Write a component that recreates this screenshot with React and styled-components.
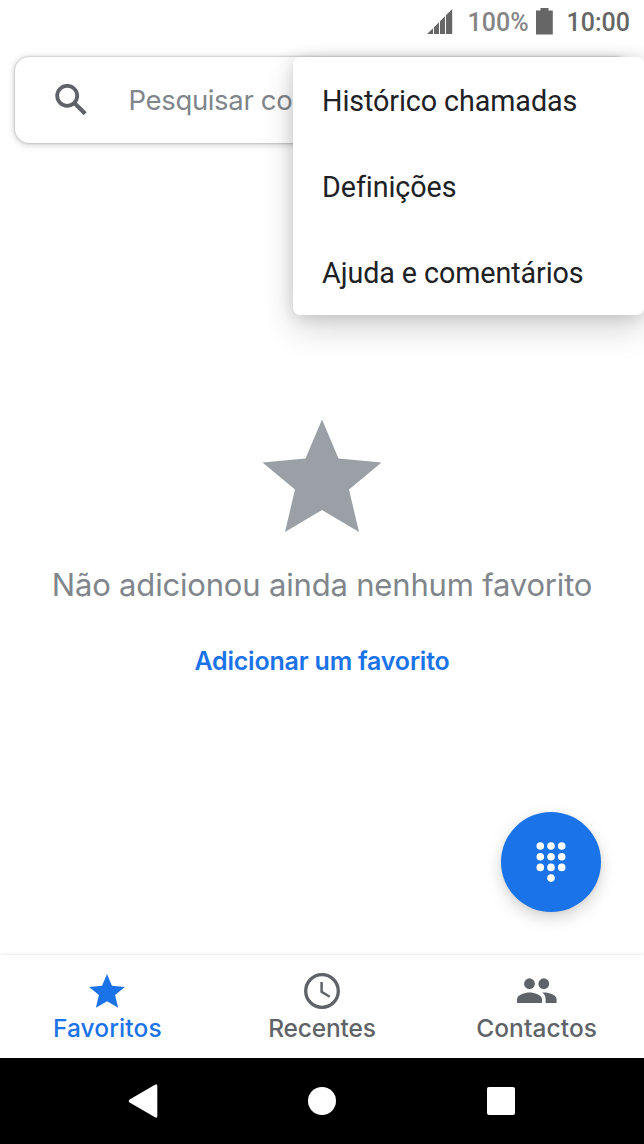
import React, { useState } from "react";
import styled, { createGlobalStyle } from "styled-components";

const menuItems = ["Histórico chamadas", "Definições", "Ajuda e comentários"];

const tabs = [
  { id: "favorites", label: "Favoritos", icon: StarIcon, size: 36, spacing: "0.1px" },
  { id: "recents", label: "Recentes", icon: ClockIcon, size: 36, spacing: "-0.15px" },
  { id: "contacts", label: "Contactos", icon: PeopleIcon, size: 40, spacing: "0.1px" },
];

function StarIcon({ size }) {
  return (
    <svg width={size} height={size} viewBox="0 0 120 120" fill="currentColor">
      <path d="M60 3.5 76.5 42.5 119.5 46.5 87 73.5 97 116 60 94 23 116 33 73.5 .5 46.5 43.5 42.5Z" />
    </svg>
  );
}

function ClockIcon() {
  return (
    <svg width="36" height="36" viewBox="0 0 36 36" fill="none" stroke="currentColor">
      <circle cx="18" cy="18" r="16.3" strokeWidth="3.3" />
      <path d="M17.6 9V18.8L25.7 23.8" strokeWidth="2.5" />
    </svg>
  );
}

function PeopleIcon() {
  return (
    <svg width="40" height="36" viewBox="0 0 40 36" fill="currentColor">
      <circle cx="12.5" cy="10.7" r="5.4" />
      <circle cx="26.8" cy="10.7" r="5.4" />
      <path d="M0 30V26.3C0 21.6 7.8 19.4 12.5 19.4S25 21.6 25 26.3V30Z" />
      <path d="M25.3 19.6C30.3 19 39.6 21.4 39.6 26.3V30H28.6V26.3C28.6 23.3 27.3 21.2 25.3 19.6Z" />
    </svg>
  );
}

function SearchIcon() {
  return (
    <svg width="32" height="32" viewBox="0 0 32 32" fill="none" stroke="#5f6368">
      <circle cx="12.2" cy="11.8" r="10" strokeWidth="3.8" />
      <path d="M19.4 19 30.2 29.8" strokeWidth="4.2" />
    </svg>
  );
}

function SignalIcon() {
  return (
    <svg width="26" height="26" viewBox="0 0 26 26" fill="#666">
      <path d="M0 25 6 19.2V25ZM7 18.2 12 13.2V25H7ZM13 12.2 18 7.2V25H13ZM19 6.2 25.2 0V25H19Z" />
    </svg>
  );
}

function BatteryIcon() {
  return (
    <svg width="17" height="27" viewBox="0 0 17 27" fill="#666">
      <path d="M4.5 0H12.5V2.4H16.8V26.5H0V2.4H4.5Z" />
    </svg>
  );
}

function DialpadIcon() {
  const dots = [];
  for (let row = 0; row < 3; row++) {
    for (let col = 0; col < 3; col++) {
      dots.push([4.3 + col * 10.7, 4 + row * 10.7]);
    }
  }
  dots.push([15, 36.1]);
  return (
    <svg width="30" height="40" viewBox="0 0 30 40" fill="#fff">
      {dots.map(([x, y]) => (
        <circle key={`${x}-${y}`} cx={x} cy={y} r="3.8" />
      ))}
    </svg>
  );
}

export default function App() {
  const [currentTab, setCurrentTab] = useState("favorites");

  return (
    <>
      <GlobalStyle />
      <Screen>
        <StatusBar>
          <SignalIcon />
          <Percent>100%</Percent>
          <BatteryIcon />
          <Time>10:00</Time>
        </StatusBar>

        <Content>
          <SearchBar>
            <SearchIcon />
            <Placeholder>Pesquisar co</Placeholder>
          </SearchBar>
          <EmptyState>
            <StarIcon size={120} />
            <Message>Não adicionou ainda nenhum favorito</Message>
            <AddButton>Adicionar um favorito</AddButton>
          </EmptyState>
          <Fab aria-label="Teclado">
            <DialpadIcon />
          </Fab>
          <Menu>
            {menuItems.map((item) => (
              <MenuItem key={item}>{item}</MenuItem>
            ))}
          </Menu>
        </Content>

        <TabBar>
          {tabs.map(({ id, label, icon: Icon, size, spacing }) => (
            <Tab key={id} $active={id === currentTab} $spacing={spacing} onClick={() => setCurrentTab(id)}>
              <Icon size={size} />
              <span>{label}</span>
            </Tab>
          ))}
        </TabBar>

        <SystemBar>
          <svg width="30" height="34" viewBox="0 0 30 34" fill="#fff">
            <path d="M1.6 15.5 27 .7Q29.3-.5 29.3 2V32Q29.3 34.5 27 33.3L1.6 18.5Q-.2 17 1.6 15.5Z" />
          </svg>
          <HomeKey />
          <OverviewKey />
        </SystemBar>
      </Screen>
    </>
  );
}

const GlobalStyle = createGlobalStyle`
  * {
    box-sizing: border-box;
  }
  body {
    margin: 0;
    background: #fff;
  }
  button {
    border: none;
    padding: 0;
    background: none;
    cursor: pointer;
  }
  svg {
    display: block;
    flex-shrink: 0;
  }
`;

const Screen = styled.div`
  display: flex;
  flex-direction: column;
  width: 644px;
  height: 1144px;
  overflow: hidden;
  background: #fff;
  font-family: Inter, "Open Sans", sans-serif;
`;

const StatusBar = styled.div`
  display: flex;
  align-items: center;
  justify-content: flex-end;
  height: 42px;
  padding: 1px 14px 0 0;
  font-family: Roboto, sans-serif;
  font-size: 25px;
  font-weight: 500;
`;

const Percent = styled.span`
  margin: 1px 7px 0 15px;
  color: #858585;
`;

const Time = styled.span`
  margin: 1px 0 0 14px;
  color: #666;
`;

const Content = styled.main`
  position: relative;
  display: flex;
  flex-direction: column;
  height: 913px;
  padding: 15px 15px 0;
  overflow: hidden;
`;

const SearchBar = styled.div`
  display: flex;
  align-items: center;
  height: 86px;
  padding-left: 40px;
  border-radius: 14px;
  background: #fff;
  box-shadow: 0 0 2px rgba(0, 0, 0, 0.3), 0 1px 7px rgba(0, 0, 0, 0.25);
`;

const Placeholder = styled.span`
  margin-left: 41.5px;
  color: #80868b;
  font-size: 27.5px;
  letter-spacing: -0.35px;
  white-space: nowrap;
`;

const EmptyState = styled.section`
  display: flex;
  flex-direction: column;
  align-items: center;
  padding-top: 273px;
  color: #9aa0a6;
`;

const Message = styled.p`
  margin: 29px 0 0;
  color: #80868b;
  font-size: 31px;
  line-height: 40px;
  letter-spacing: -0.18px;
  white-space: nowrap;
`;

const AddButton = styled.button`
  margin-top: 40px;
  color: #1a73e8;
  font-family: inherit;
  font-size: 25px;
  font-weight: 600;
  line-height: 32px;
  letter-spacing: -0.2px;
`;

const Fab = styled.button`
  display: flex;
  align-items: center;
  justify-content: center;
  position: absolute;
  right: 43px;
  bottom: 43px;
  width: 100px;
  height: 100px;
  border-radius: 50%;
  background: #1a73e8;
  box-shadow: 0 6px 16px rgba(0, 0, 0, 0.17), 0 1px 4px rgba(0, 0, 0, 0.06);
`;

const Menu = styled.div`
  position: absolute;
  top: 15px;
  right: 0;
  width: 351px;
  height: 258px;
  border-radius: 7px;
  background: #fff;
  box-shadow: 0 14px 32px rgba(0, 0, 0, 0.16), 0 1px 16px rgba(0, 0, 0, 0.14);
`;

const MenuItem = styled.div`
  display: flex;
  align-items: center;
  height: 86px;
  padding: 2px 0 0 29px;
  color: #202124;
  font-family: Roboto, sans-serif;
  font-size: 28.7px;
  letter-spacing: -0.08px;
  font-variant-ligatures: common-ligatures;
`;

const TabBar = styled.nav`
  display: grid;
  grid-template-columns: repeat(3, 1fr);
  position: relative;
  height: 103px;
  background: #fff;
  box-shadow: 0 -1px 3px rgba(0, 0, 0, 0.09);
`;

const Tab = styled.button`
  display: flex;
  flex-direction: column;
  align-items: center;
  padding-top: 18px;
  color: ${({ $active }) => ($active ? "#1a73e8" : "#5f6368")};
  font-family: inherit;
  font-size: 24.5px;
  font-weight: 500;
  line-height: 30px;
  letter-spacing: ${({ $spacing }) => $spacing};
  span {
    margin-top: 4px;
  }
`;

const SystemBar = styled.footer`
  display: flex;
  align-items: center;
  justify-content: space-between;
  position: relative;
  height: 86px;
  padding: 0 129px 0 128px;
  background: #000;
`;

const HomeKey = styled.div`
  width: 28px;
  height: 28px;
  margin-right: 2px;
  border-radius: 50%;
  background: #fff;
`;

const OverviewKey = styled.div`
  width: 28px;
  height: 28px;
  border-radius: 2px;
  background: #fff;
`;
